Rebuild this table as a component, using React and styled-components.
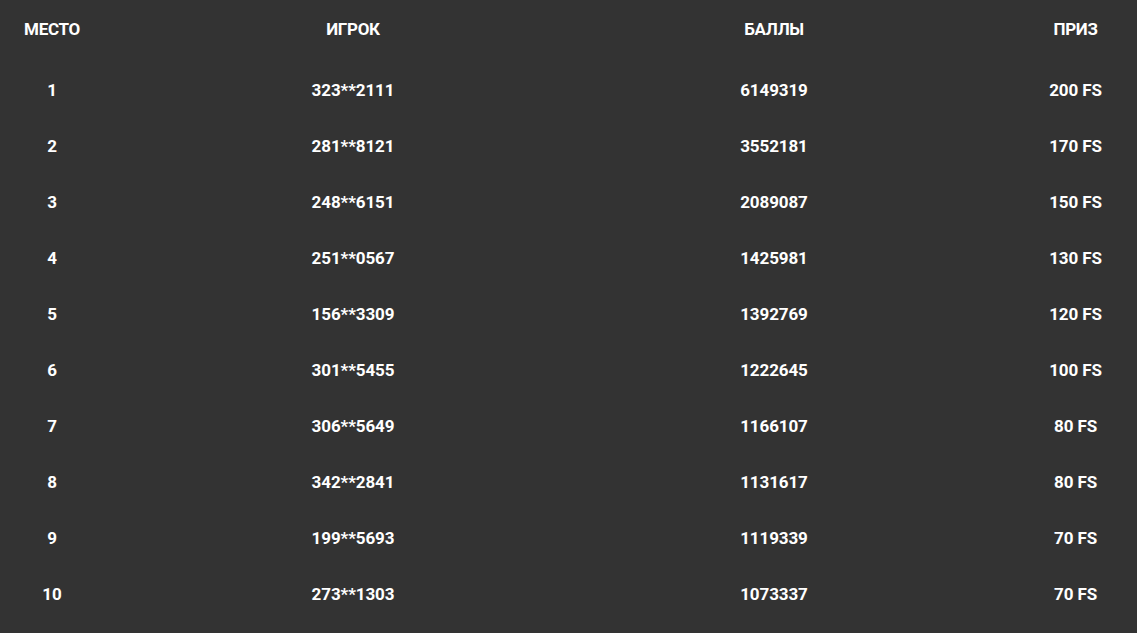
import React from "react";
import styled, { createGlobalStyle } from "styled-components";

const Global = createGlobalStyle`
  html, body { margin: 0; padding: 0; background: #333333; }
  body { font-family: Roboto, "Noto Sans", Arial, sans-serif; }
`;

const Board = styled.div`
  width: 1137px;
  min-height: 633px;
  background: #333333;
  color: #ffffff;
`;

const Row = styled.div`
  display: grid;
  grid-template-columns: 104px 498px 344px 191px;
  align-items: center;
  height: ${(p) => (p.$head ? "58px" : "56px")};
  margin-bottom: ${(p) => (p.$head ? "4px" : "0")};
`;

const Cell = styled.div`
  text-align: center;
  font-size: 17px;
  font-weight: 700;
  letter-spacing: ${(p) => (p.$head ? "-0.3px" : "-0.1px")};
  padding-left: ${(p) => (p.$last ? "68px" : "0")};
  white-space: nowrap;
`;

const data = [
  [1, "323**2111", "6149319", "200 FS"],
  [2, "281**8121", "3552181", "170 FS"],
  [3, "248**6151", "2089087", "150 FS"],
  [4, "251**0567", "1425981", "130 FS"],
  [5, "156**3309", "1392769", "120 FS"],
  [6, "301**5455", "1222645", "100 FS"],
  [7, "306**5649", "1166107", "80 FS"],
  [8, "342**2841", "1131617", "80 FS"],
  [9, "199**5693", "1119339", "70 FS"],
  [10, "273**1303", "1073337", "70 FS"],
];

export default function App() {
  return (
    <>
      <Global />
      <Board>
        <Row $head>
          <Cell $head>МЕСТО</Cell>
          <Cell $head>ИГРОК</Cell>
          <Cell $head>БАЛЛЫ</Cell>
          <Cell $head $last>ПРИЗ</Cell>
        </Row>
        {data.map((r) => (
          <Row key={r[0]}>
            <Cell>{r[0]}</Cell>
            <Cell>{r[1]}</Cell>
            <Cell>{r[2]}</Cell>
            <Cell $last>{r[3]}</Cell>
          </Row>
        ))}
      </Board>
    </>
  );
}
